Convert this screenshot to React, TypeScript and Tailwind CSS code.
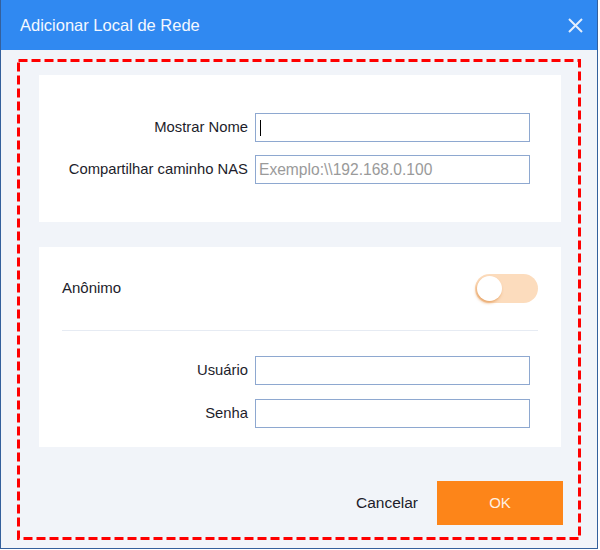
import React from "react";

const font = { fontFamily: '"Liberation Sans", Arial, sans-serif' };

function Field({ label, placeholder, caret }: { label: string; placeholder?: string; caret?: boolean }) {
  return (
    <div className="flex items-center">
      <div className="w-[210px] pr-[1px] text-right text-[14.8px] text-[#1d1d2b]">{label}</div>
      <div className="ml-[6px] relative flex h-[29px] w-[275px] items-center border border-[#8ea8d0] bg-white pl-[3px] text-[15.6px] text-[#9a9a9a]">
        {caret && <span className="ml-[1px] h-[16px] w-[1px] bg-black" />}
        {placeholder}
      </div>
    </div>
  );
}

export default function App() {
  return (
    <div className="h-[550px] w-[600px] bg-white" style={font}>
      <div className="flex h-[549px] w-[598px] flex-col border-x border-b border-[#34609c] bg-[#f1f4f9]">
        <div className="flex h-[50px] shrink-0 items-center justify-between bg-[#3089f1] pl-[19px] pr-[14px]">
          <span className="text-[16.5px] text-[#f4f8ff]">Adicionar Local de Rede</span>
          <svg width="15" height="15" viewBox="0 0 15 15" className="text-[#e3eefc]">
            <path d="M1 1 L14 14 M14 1 L1 14" stroke="currentColor" strokeWidth="2" />
          </svg>
        </div>
        <div className="relative flex flex-1 flex-col pl-[38px] pr-[36px] pt-[25px]">
          <div className="flex flex-col gap-[13px] bg-white py-[38px]">
            <Field label="Mostrar Nome" caret />
            <Field label="Compartilhar caminho NAS" placeholder="Exemplo:\\192.168.0.100" />
          </div>
          <div className="mt-[25px] flex flex-col bg-white px-[23px] pb-[19px] pt-[27px]">
            <div className="flex h-[29px] items-center justify-between">
              <span className="text-[15px] text-[#1d1d2b]">Anônimo</span>
              <div className="flex h-[29px] w-[63px] items-center rounded-full bg-[#fcdcbd] pl-[2px]">
                <div className="h-[25px] w-[25px] rounded-full bg-white shadow-[-1px_2px_3px_rgba(226,150,80,0.75)]" />
              </div>
            </div>
            <div className="mt-[27px] h-px bg-[#e6ebf3]" />
            <div className="-ml-[23px] mt-[25px] flex flex-col gap-[14px]">
              <Field label="Usuário" />
              <Field label="Senha" />
            </div>
          </div>
          <div className="-mr-[2px] mt-[34px] flex items-center justify-end">
            <span className="mr-[19px] text-[15.5px] text-[#1d1d2b]">Cancelar</span>
            <div className="flex h-[44px] w-[126px] items-center justify-center bg-[#fd8519] text-[15px] text-[#fff0e2]">
              OK
            </div>
          </div>
          <svg className="pointer-events-none absolute left-[15px] top-[8px]" width="566" height="483">
            <rect x="2.5" y="2.5" width="561" height="478" fill="none" stroke="#ff0000" strokeWidth="3" strokeDasharray="9 4" />
          </svg>
        </div>
      </div>
    </div>
  );
}
